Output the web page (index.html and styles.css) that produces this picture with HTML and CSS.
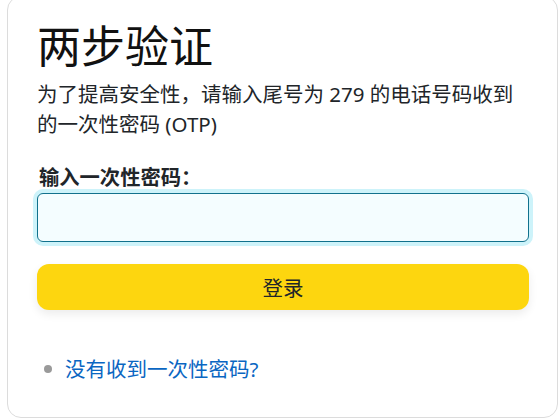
FILE: index.html
```html
<!DOCTYPE html>
<html lang="zh-CN">
<head>
<meta charset="utf-8">
<title>两步验证</title>
<link rel="stylesheet" href="styles.css">
</head>
<body>
<main class="card">
  <h1 class="title">两步验证</h1>
  <p class="desc">为了提高安全性，请输入尾号为 279 的电话号码收到的一次性密码 (OTP)</p>
  <form class="form">
    <label class="label" for="otp">输入一次性密码：</label>
    <input class="input" id="otp" type="text" autocomplete="one-time-code">
    <button class="btn" type="button">登录</button>
  </form>
  <ul class="links">
    <li class="links-item"><a class="link" href="#">没有收到一次性密码?</a></li>
  </ul>
</main>
</body>
</html>
```

FILE: styles.css
```css
html, body {
  margin: 0;
  padding: 0;
  background: #ffffff;
}

body {
  font-family: "Noto Sans", "Noto Sans CJK SC", sans-serif;
  color: #212529;
  overflow: hidden;
}

.card {
  box-sizing: border-box;
  width: 551px;
  height: 422px;
  margin: -4px 0 0 7px;
  padding: 23px 28px 0 29px;
  border: 1px solid #dcdcdc;
  border-radius: 14px;
  background: #ffffff;
}

.title {
  margin: 0;
  font-size: 44px;
  line-height: 52px;
  font-weight: 400;
  color: #111111;
}

.desc {
  margin: 7px 0 0;
  font-size: 20.5px;
  line-height: 30px;
}

.form {
  display: flex;
  flex-direction: column;
  margin-top: 23px;
}

.label {
  font-size: 20.3px;
  line-height: 30px;
  font-weight: 700;
  padding-left: 2px;
}

.input {
  box-sizing: border-box;
  margin-top: 1px;
  height: 49px;
  width: 100%;
  border: 1px solid #11718d;
  border-radius: 6px;
  background: #f4fdff;
  box-shadow: 0 0 0 4px #cdf3fa;
  outline: none;
  font-size: 20px;
  padding: 0 12px;
}

.btn {
  margin-top: 22px;
  height: 46px;
  width: 100%;
  border: none;
  border-radius: 12px;
  background: #fdd60f;
  box-shadow: 0 4px 10px rgba(0, 0, 0, 0.08);
  font-family: inherit;
  font-size: 20.5px;
  color: #212529;
  cursor: pointer;
}

.links {
  list-style: none;
  margin: 44px 0 0;
  padding: 0 0 0 7px;
}

.links-item {
  display: flex;
  align-items: center;
  font-size: 20.5px;
  line-height: 30px;
}

.links-item::before {
  content: "";
  width: 8px;
  height: 8px;
  border-radius: 50%;
  background: #9a9a9a;
  margin-right: 13px;
}

.link {
  color: #0a66c2;
  text-decoration: none;
}
```
